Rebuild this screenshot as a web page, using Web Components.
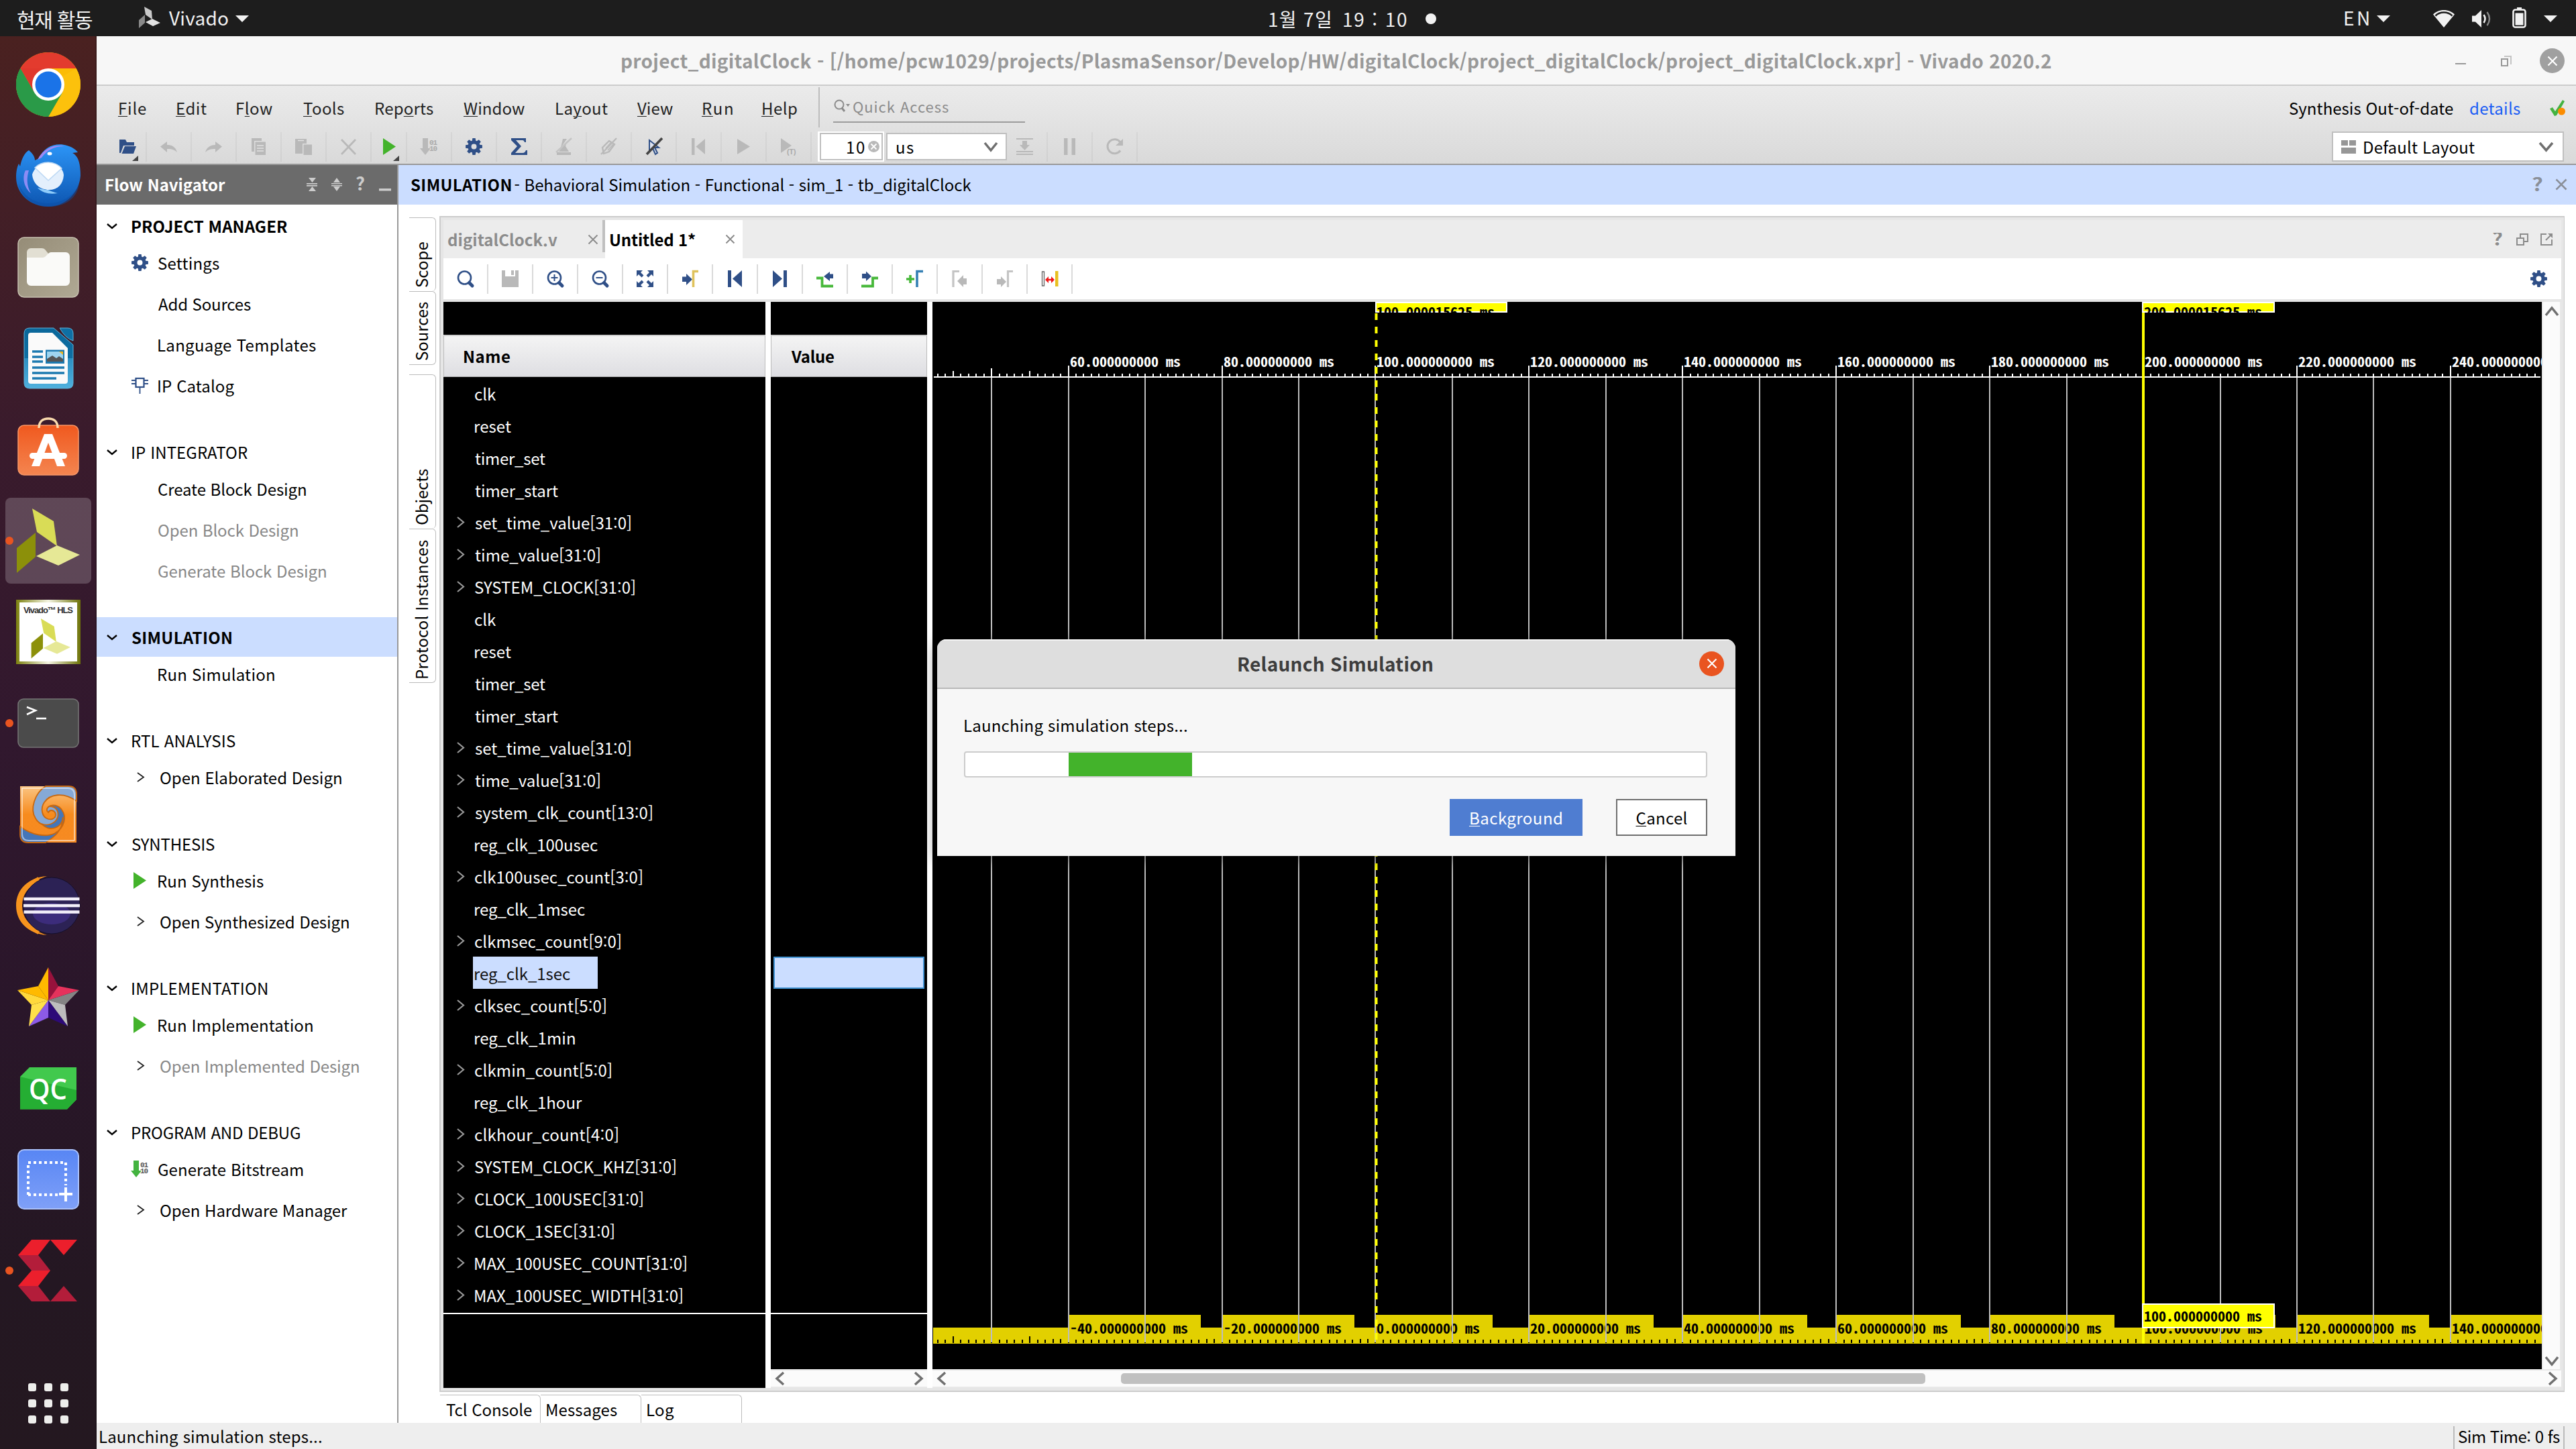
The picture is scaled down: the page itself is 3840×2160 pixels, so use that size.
<!DOCTYPE html>
<html lang="ko">
<head>
<meta charset="utf-8">
<title>Vivado 2020.2</title>
<style>
html,body{margin:0;padding:0;width:3840px;height:2160px;overflow:hidden;background:#fff}
body{font-family:"Noto Sans CJK KR","Noto Sans",sans-serif;font-size:24px;line-height:1;color:#000}
</style>
</head>
<body>
<desktop-screen></desktop-screen>
<script>
const BLUE = '#2f4f87', GREY = '#b9b9b9';

function define(name, css, html) {
  customElements.define(name, class extends HTMLElement {
    connectedCallback() {
      if (this.shadowRoot) return;
      const root = this.attachShadow({ mode: 'open' });
      root.innerHTML = `<style>*{box-sizing:border-box}:host{display:block;box-sizing:border-box}${css}</style>` +
        (typeof html === 'function' ? html(this) : html);
    }
  });
}

function gearPath(c, R, r, hole) {
  let d = '';
  for (let i = 0; i < 8; i++) {
    const a = i * Math.PI / 4;
    [[-.30, r], [-.17, R], [.17, R], [.30, r]].forEach(([o, q], k) => {
      d += (i || k ? 'L' : 'M') + (c + q * Math.sin(a + o)).toFixed(2) + ' ' + (c - q * Math.cos(a + o)).toFixed(2);
    });
  }
  return d + `ZM${c - hole} ${c}a${hole} ${hole} 0 1 0 ${2 * hole} 0a${hole} ${hole} 0 1 0 ${-2 * hole} 0z`;
}
const corner = '<path d="M28 26v8h-9z" fill="#444"/>';
const bits = (arrow, ink) => `<path d="M3 0h8v15h4l-8 10-8-10h4z" fill="${arrow}"/><text x="13" y="10" font-family="Liberation Mono" font-weight="700" font-size="11" fill="${ink}" textLength="12">01</text><text x="13" y="19" font-family="Liberation Mono" font-weight="700" font-size="11" fill="${ink}" textLength="12">10</text>`;
const lens = `<circle cx="11.5" cy="11" r="9.5" fill="none" stroke="${BLUE}" stroke-width="2.6"/><path d="M18.5 18.5l4.5 4.5" stroke="${BLUE}" stroke-width="5" stroke-linecap="round"/>`;
const ICONS = {
  open: `<path d="M0 22V2h9l2 4h11v5H6L2 22z" fill="${BLUE}"/><path d="M8 12h17l-4 11H3.500z" fill="${BLUE}"/>` + corner,
  undo: `<path d="M0 12.500L10 5v5c8 0 13 4 15 11-4-4-8-5-15-5v5z" fill="${GREY}"/>`,
  redo: `<path d="M25 12.500L15 5v5C7 10 2 14 0 21c4-4 8-5 15-5v5z" fill="${GREY}"/>`,
  copy: `<path d="M2 0h15v4H6v16H2z" fill="${GREY}"/><path d="M7.500 5.500H23V25H7.500z" fill="${GREY}"/><path d="M10 11h10M10 15h10M10 19h10" stroke="#e2e2e2" stroke-width="1.500"/>`,
  paste: `<path d="M0 1h17v7h-6v15H0z" fill="${GREY}"/><path d="M4 3.500h9" stroke="#e2e2e2" stroke-width="1.500"/><path d="M12.500 9.500H25V25H12.500z" fill="${GREY}"/>`,
  cut: `<path d="M2 2l21 22M23 2L2 24" stroke="${GREY}" stroke-width="2.800"/>`,
  run: `<path d="M4 0l19 12.500L4 25z" fill="#43b32b"/>` + corner,
  play: `<path d="M3 0l19 12.500L3 25z" fill="#43b32b"/>`,
  bits: bits(GREY, '#aaa'), bitstream: bits('#43b340', '#555'),
  gear: `<path fill-rule="evenodd" d="${gearPath(12.5, 12.6, 9.2, 4)}" fill="${BLUE}"/>`,
  sigma: `<path d="M1 0h22v6h-2c-1-2-1-3-4-3H8l8 9-9 10h11c3 0 4-2 5-4h2v7H1v-3l9-10L1 3z" fill="${BLUE}"/>`,
  noclk: `<path d="M2 21h21v4H2z" fill="${GREY}"/><path d="M11 1h6l-9 13zM5 20L17 5l-2 7 5 8z" fill="${GREY}"/><path d="M24 0L1 21" stroke="#c4c4c4" stroke-width="2.500"/>`,
  nopen: `<path d="M3 14L13 4l8 5-8 11-8 3z" fill="none" stroke="${GREY}" stroke-width="2.400"/><path d="M8 15l8-9M11 18l8-9" stroke="${GREY}" stroke-width="1.500"/><path d="M24 0L1 24" stroke="${GREY}" stroke-width="2.400"/>`,
  nocursor: `<path d="M6 3v17l5-5 4 9 3-2-4-8h6z" fill="#dfe4ef" stroke="${BLUE}" stroke-width="2"/><path d="M25 0L2 24" stroke="#444" stroke-width="3.600"/>`,
  restart: `<path d="M2 0h4.500v25H2zM22 1v23L8.500 12.500z" fill="${GREY}"/>`,
  playg: `<path d="M3 1l19 11.500L3 24z" fill="${GREY}"/>`,
  playt: `<path d="M1 0l16 11L1 22z" fill="${GREY}"/><text x="10" y="24" font-family="Liberation Sans" font-weight="700" font-size="10.500" fill="#aaa">(T)</text>`,
  step: `<path d="M0 1h25M0 20h25M0 24h25" stroke="${GREY}" stroke-width="2.200"/><path d="M9 4h7v6h4l-7.500 8L5 10h4z" fill="${GREY}"/>`,
  pause: `<path d="M4 0h5.500v25H4zM15.500 0H21v25h-5.500z" fill="${GREY}"/>`,
  reload: `<path d="M21 18.500A10.500 10.500 0 1 1 21 6" fill="none" stroke="${GREY}" stroke-width="3"/><path d="M25 1v10H14z" fill="${GREY}"/>`,
  find: lens,
  save: `<path d="M0 0h25v25H0z" fill="${GREY}"/><path d="M5 0h15v9H5z" fill="#fff"/><path d="M14 0h4v7h-4z" fill="${GREY}"/>`,
  zoomin: lens + `<path d="M11.500 6v10M6.500 11h10" stroke="${BLUE}" stroke-width="2"/>`,
  zoomout: lens + `<path d="M6.500 11h10" stroke="${BLUE}" stroke-width="2"/>`,
  zoomfit: `<path d="M0 0h9L6 3l4.500 4.500-3 3L3 6 0 9zM25 0v9l-3-3-4.500 4.500-3-3L19 3l-3-3zM0 25v-9l3 3 4.500-4.500 3 3L6 22l3 3zM25 25h-9l3-3-4.500-4.500 3-3L22 19l3-3z" fill="${BLUE}"/>`,
  tocursor: `<path d="M1 9.500h6V5l9 8.500-9 8.500v-5H1z" fill="${BLUE}"/><path d="M17.500 25V1.500H25" fill="none" stroke="#dfc25c" stroke-width="3.600"/>`,
  first: `<path d="M2 0h5v25H2zM23 0v25L9 12.500z" fill="${BLUE}"/>`,
  last: `<path d="M18 0h5v25h-5zM2 0v25l14-12.500z" fill="${BLUE}"/>`,
  prevedge: `<path d="M0 11.500h8.500v12H25" fill="none" stroke="#47b83a" stroke-width="3.800"/><path d="M25 5.500h-5V2l-9 7 9 7v-4h5z" fill="${BLUE}"/>`,
  nextedge: `<path d="M0 23.500h17v-12h8" fill="none" stroke="#47b83a" stroke-width="3.800"/><path d="M1 5h6V1.500L15 9l-8 7v-4H1z" fill="${BLUE}"/>`,
  addmark: `<path d="M0 13h12M6 7v12" stroke="#47b83a" stroke-width="3.600"/><path d="M16 25V1.500h9" fill="none" stroke="#3580b4" stroke-width="3.600"/>`,
  prevmark: `<path d="M3 25V1.500h9" fill="none" stroke="#c4c4c4" stroke-width="3.200"/><path d="M23 12h-5V7l-9 9 9 9v-4h5z" fill="${GREY}"/>`,
  nextmark: `<path d="M1 13h6V9l8 8-8 8v-4H1z" fill="${GREY}"/><path d="M17.500 25V1.500H25" fill="none" stroke="#c4c4c4" stroke-width="3.200"/>`,
  span: `<path d="M1.500 2h3v21h-3z" fill="#fff" stroke="#666" stroke-width="1.300"/><path d="M21 1h4.500v23H21z" fill="#e8c020"/><path d="M6 14l5-5v3.700h4V9l5 5-5 5v-3.700h-4V19z" fill="#f01818"/>`,
  ip: `<rect x="6.500" y="2" width="12" height="13" fill="none" stroke="${BLUE}" stroke-width="2.200"/><path d="M0 5h6M0 10h6M19 5h6M19 10h6M12.500 16v9" stroke="${BLUE}" stroke-width="1.800"/>`
};
define('ui-icon', 'svg{display:block;overflow:visible;width:25px;height:25px}', el => `<svg viewBox="0 0 25 25">${ICONS[el.getAttribute('name')]}</svg>`);

define('ui-chevron', ':host{display:block;flex:none}svg{display:block;overflow:visible}', el => {
  const w = +el.getAttribute('w'), h = +el.getAttribute('h'), s = el.getAttribute('s') || 2, c = el.getAttribute('c') || '#000';
  const d = { down: `M1 1L${w / 2} ${h - 1}L${w - 1} 1`, up: `M1 ${h - 1}L${w / 2} 1L${w - 1} ${h - 1}`, right: `M1 1L${w - 1} ${h / 2}L1 ${h - 1}`, left: `M${w - 1} 1L1 ${h / 2}L${w - 1} ${h - 1}` }[el.getAttribute('dir')];
  return `<svg width="${w}" height="${h}"><path d="${d}" fill="none" stroke="${c}" stroke-width="${s}"/></svg>`;
});
define('ui-x', ':host{flex:none}svg{display:block}', el => {
  const n = +el.getAttribute('n');
  return `<svg width="${n}" height="${n}"><path d="M1.500 1.500L${n - 1.5} ${n - 1.5}M${n - 1.5} 1.500L1.500 ${n - 1.5}" stroke="${el.getAttribute('c')}" stroke-width="${el.getAttribute('s') || 2.4}"/></svg>`;
});
const f = (w, t, style = '') => `<fit-text w="${w}" style="${style}">${t}</fit-text>`;

/* ---------- top bar ---------- */
define('top-bar', `:host{height:54px;background:#1d1d1d;color:#f2f2f2;font-size:28px;display:flex;align-items:center;padding-left:26px;padding-bottom:2px}
svg{display:block;flex:none}`, `
${f(112, '현재 활동', 'font-size:30px;margin-top:3px')}
<svg width="32" height="32" viewBox="0 0 32 32" style="margin-left:69px"><path d="M8 0l11 6 1 13L10 12z" fill="#c9c9c9"/><path d="M0 20l9-8v12l-9 8z" fill="#8a8a8a"/><path d="M10 23l10-5 12 6-11 5z" fill="#e3e3e3"/></svg>
${f(88, 'Vivado', 'margin-left:13px')}
<svg width="20" height="10" style="margin-left:11px;margin-top:4px"><path d="M0 0h20l-10 10z" fill="#f2f2f2"/></svg>
${f(92, '1월 7일', 'margin-left:1521px;margin-top:4px')}${f(94, '19 : 10', 'margin-left:19px;margin-top:4px')}
<svg width="16" height="16" style="margin-left:28px;margin-top:3px"><circle cx="8" cy="8" r="8" fill="#f2f2f2"/></svg>
${f(36, 'EN', 'margin-left:1354px')}
<svg width="20" height="10" style="margin-left:12px;margin-top:4px"><path d="M0 0h20l-10 10z" fill="#f2f2f2"/></svg>
<svg width="32" height="26" viewBox="0 0 32 26" style="margin-left:64px;margin-top:3px"><path d="M16 0C9.500 0 4 2.500 0 6.500L16 26 32 6.500C28 2.500 22.500 0 16 0z" fill="#f2f2f2"/><path d="M3.500 8.500C7 5 11 3.500 16 3.500s9 1.500 12.500 5" fill="none" stroke="#1d1d1d" stroke-width="2.500"/></svg>
<svg width="30" height="26" viewBox="0 0 30 26" style="margin-left:26px;margin-top:3px"><path d="M0 8.500h5L14 0v26l-9-8.500H0z" fill="#f2f2f2"/><path d="M17.500 7q4 6 0 12" fill="none" stroke="#f2f2f2" stroke-width="2.600"/><path d="M22.500 3q7 10 0 20" fill="none" stroke="#888" stroke-width="2.400"/></svg>
<svg width="21" height="31" viewBox="0 0 21 31" style="margin-left:30px"><path d="M7 0h7v3H7z" fill="#f2f2f2"/><rect x="1.500" y="3.500" width="18" height="26" rx="3" fill="none" stroke="#f2f2f2" stroke-width="2.600"/><path d="M4.500 8.500h12v18h-12z" fill="#f2f2f2"/></svg>
<svg width="20" height="10" style="margin-left:26px;margin-top:4px"><path d="M0 0h20l-10 10z" fill="#f2f2f2"/></svg>`);

/* ---------- dock ---------- */
const vivadoLogo = '<path d="M24 0l32 19 5 37-30-21z" fill="#d9dc56"/><path d="M1 59l28-23v36L1 96z" fill="#8c900a"/><path d="M30 71l31-16 34 14-32 16z" fill="#e6e896"/>';
const DOCK = {
  chrome: `<circle cx="48" cy="48" r="48" fill="#fbbc05"/><path d="M48 48L6.400 24A48 48 0 0 1 89.600 24H48z" fill="#e33b2e"/><path d="M48 48L89.600 24A48 48 0 0 1 48 96L68.800 60z" fill="#fcc10c"/><path d="M48 96A48 48 0 0 1 6.400 24L27.200 60 48 72 68.800 60z" fill="#2a9a48"/><path d="M6.400 24L27.200 60 48 48V24z" fill="#e0382c"/><path d="M6.400 24A48 48 0 0 0 48 96L68.800 60 48 72 27.200 60z" fill="#2a9a48"/><circle cx="48" cy="48" r="24" fill="#fff"/><circle cx="48" cy="48" r="19.500" fill="#1a73e8"/>`,
  thunderbird: `<defs><linearGradient id="tb" x1="0" y1="0" x2="0" y2="1"><stop offset="0" stop-color="#2c95f7"/><stop offset="1" stop-color="#0d55b0"/></linearGradient></defs><path d="M34 22C42 4 60-2 76 3c8 2 14 7 16 10l-8 1c8 4 12 14 12 34-2 26-23 46-48 46C22 94 0 76 0 50 0 40 2 34 4 30l2 4c2-10 6-20 13-24 6 5 9 10 9 15z" fill="url(#tb)"/><path d="M32 24C42 5 60 1 72 4c-16 0-26 6-34 17z" fill="#a08af5"/><path d="M14 40c-6 12-1 27 8 34-7-12-6-24-3-34z" fill="#8b8cf5"/><path d="M24 46c4-12 14-18 26-17 12 1 20 8 21 18-1 14-9 22-22 22S25 60 24 46z" fill="#e3effc"/><path d="M28 36l20 19 20-18c-4-5-12-9-20-9s-15 3-20 8z" fill="#fff" stroke="#bcd8f4" stroke-width="1.500"/><path d="M32 66c8 8 18 10 30 8-10-2-14-6-18-5z" fill="#8ecbfa"/><ellipse cx="50" cy="15" rx="3.500" ry="2.500" fill="#fff"/><path d="M4 60c8 22 28 30 46 29 20-1 38-12 44-30-2 23-22 35-44 35S8 82 4 60z" fill="#0b4ea6" opacity=".5"/>`,
  files: `<defs><linearGradient id="fl" x1="0" y1="0" x2="1" y2="1"><stop offset="0" stop-color="#958c77"/><stop offset="1" stop-color="#b0a994"/></linearGradient></defs><rect x="3" y="4" width="90" height="89" rx="9" fill="url(#fl)" stroke="#c5bfae" stroke-width="1.500"/><path d="M16 26a6 6 0 0 1 6-6h16q4 0 6 3l4 5v8H16z" fill="#e2dfd3"/><path d="M16 34h24q3 0 5-3l3-3q2-2 4-2h22a6 6 0 0 1 6 6v38a6 6 0 0 1-6 6H22a6 6 0 0 1-6-6z" fill="#fafaf8"/>`,
  writer: `<defs><linearGradient id="wr" x1="0" y1="0" x2="0" y2="1"><stop offset="0" stop-color="#0a679a"/><stop offset=".5" stop-color="#0e6fa4"/><stop offset=".5" stop-color="#2c8fc2"/><stop offset="1" stop-color="#4fb0dd"/></linearGradient></defs><path d="M20 3h36l29 25v57q0 8-8 8H20q-8 0-8-8V11q0-8 8-8z" fill="url(#wr)" stroke="#5eb3da"/><path d="M65 3h12q8 0 8 8v11q-12-4-20-19z" fill="#0e6fa4" stroke="#5eb3da"/><path d="M22 10h32l23 23v49q0 4-4 4H22q-4 0-4-4V14q0-4 4-4z" fill="#fafafa"/><path d="M24 38h16M24 46h16M24 53h16M24 62h48M24 70h48M24 78h36" stroke="#1d7ab0" stroke-width="3.500"/><path d="M44 35.500h28V56H44z" fill="#1d7ab0"/><path d="M46 38h24v15H46z" fill="#9ed4ef"/><path d="M46 53v-4l8-5 6 4 4-3 6 4v4z" fill="#555"/><path d="M64 38h6v5z" fill="#f5b417"/>`,
  software: `<defs><linearGradient id="sw" x1="0" y1="0" x2="0" y2="1"><stop offset="0" stop-color="#f0591f"/><stop offset="1" stop-color="#f48550"/></linearGradient></defs><rect x="3" y="12" width="90" height="74" rx="9" fill="url(#sw)" stroke="#f79767" stroke-width="1.500"/><path d="M34 16C34 6 40 2 48 2s14 4 14 14" fill="none" stroke="#fbdcae" stroke-width="3.500"/><path d="M42 25h12l19 48H61L48 38 35 73H23z" fill="#fff"/><rect x="20" y="53" width="56" height="9" rx="4.500" fill="#fff"/>`,
  vivado: vivadoLogo,
  hls: `<defs><linearGradient id="hl"><stop offset="0" stop-color="#7d8210"/><stop offset=".5" stop-color="#f4f4e2"/><stop offset="1" stop-color="#6e7308"/></linearGradient></defs><path d="M0 0h96v96H0z" fill="url(#hl)"/><path d="M5 4h86v88H5z" fill="#fff"/><g transform="translate(22 28) scale(.62)">${vivadoLogo}</g><text x="11" y="20" font-family="Liberation Sans" font-weight="700" font-size="13" fill="#333" textLength="74">Vivado™ HLS</text>`,
  terminal: `<rect x="3" y="12" width="90" height="72" rx="8" fill="#4b4b4b" stroke="#767676" stroke-width="1.500"/><path d="M16 24l13 5-13 6" fill="none" stroke="#fff" stroke-width="2.600"/><path d="M30 41h15" stroke="#fff" stroke-width="2.600"/>`,
  swirl: `<defs><linearGradient id="sr" x1="0" y1="0" x2="0" y2="1"><stop offset="0" stop-color="#fbc583"/><stop offset=".5" stop-color="#f78b1e"/><stop offset="1" stop-color="#f68a22"/></linearGradient></defs><path d="M6 6h72q12 0 12 12v72H18Q6 90 6 78z" fill="url(#sr)"/><path d="M44 6h34q12 0 12 12v10C70 14 50 18 42 30c-6 9-4 22 6 25 8 2 13-4 10-10-3-4-8-4-10 0-5-4 0-11 7-10 12 2 15 16 7 25-10 9-27 5-33-6C20 40 28 16 44 6z" fill="#86a9d6" stroke="#c9680f" stroke-width="1.800"/><path d="M6 66c18 14 40 16 52 10 14-8 18-24 10-35-5-7-14-8-18-5 10 0 14 8 12 16-3 10-16 14-24 10 10 12 30 8 32-10-1 22-14 30-26 38H18Q6 90 6 78z" fill="#4576b8" stroke="#c9680f" stroke-width="1.800"/><path d="M9 9h68q10 0 10 10v68" fill="none" stroke="#fff" stroke-opacity=".5" stroke-width="2"/><path d="M9 9v68q0 10 10 10h68" fill="none" stroke="#fff" stroke-opacity=".5" stroke-width="2"/>`,
  eclipse: `<path d="M46 4C18 6 0 24 0 48s18 42 46 44C26 86 8 72 8 48S26 10 46 4z" fill="#f7941e"/><path d="M34 8C14 18 6 32 6 48s8 30 28 40" fill="none" stroke="#f7941e" stroke-width="6"/><circle cx="53" cy="48" r="42" fill="#2c2255" stroke="#15102c"/><ellipse cx="53" cy="60" rx="28" ry="16" fill="#43318c" opacity=".7"/><path d="M11.500 38h83M11 48h84M11.500 57.500h83" stroke="#f3f0fa" stroke-width="4.500"/>`,
  star: [['48 4 48 53 33 32', '#ffba00'], ['48 4 63 32 48 53', '#97123c'], ['63 32 94 38 48 53', '#e6325c'], ['94 38 73 60 48 53', '#848484'], ['73 60 77 92 48 53', '#bdbdbd'], ['77 92 48 79 48 53', '#2d0a78'], ['48 79 19 92 48 53', '#8c5ae6'], ['19 92 23 60 48 53', '#ffe04a'], ['23 60 2 38 48 53', '#ffd93c'], ['2 38 33 32 48 53', '#ffba00']].map(([p, c]) => `<polygon points="${p}" fill="${c}"/>`).join(''),
  qc: `<path d="M6 31l14-14h70v48L76 79.500H6z" fill="#41c94d"/><path d="M6 31l84 20v14L76 79.500H6z" fill="#25ae33"/><text x="19" y="64.500" font-family="Open Sans,Noto Sans" font-weight="600" font-size="44" fill="#fff" textLength="57" lengthAdjust="spacingAndGlyphs">QC</text>`,
  shot: `<defs><linearGradient id="sh" x1="0" y1="0" x2="0" y2="1"><stop offset="0" stop-color="#5886f4"/><stop offset="1" stop-color="#7fa0f8"/></linearGradient></defs><rect x="3" y="4" width="90" height="88" rx="9" fill="url(#sh)" stroke="#a9c0fb" stroke-width="2"/><path d="M18 71V23M18 23h56M74 23v34M18 71h48" fill="none" stroke="#fff" stroke-width="4" stroke-dasharray="4 4"/><path d="M64 70h20M74 60v21" stroke="#fff" stroke-width="4"/>`,
  xilinx: `<path d="M23 2h28L33 25H3zM51 2h40L71 25zM23 48h28L33 71H3z" fill="#ec1f2c"/><path d="M3 25h30l18 23H23zM3 71h30l18 23H23zM71 71l20 23H51z" fill="#b31d3a"/>`
};
define('dock-icon', `:host{height:136px;display:flex;align-items:center;justify-content:center;position:relative}
.tile{width:128px;height:128px;border-radius:8px;display:flex;align-items:center;justify-content:center}
:host([active]) .tile{background:rgba(255,255,255,.2)}
svg{width:96px;height:96px;display:block;overflow:visible}
i{position:absolute;left:8px;top:62px;width:12px;height:12px;border-radius:50%;background:#e95420}`,
  el => `<div class="tile"><svg viewBox="0 0 96 96">${DOCK[el.getAttribute('name')]}</svg></div>${el.hasAttribute('running') ? '<i></i>' : ''}`);
define('app-dock', `:host{width:144px;flex:none;padding-top:4px;display:flex;flex-direction:column;background:linear-gradient(#4a2120,#431f26 12%,#3a1b2c 28%,#31182e 50%,#2a162a 68%,#241722 88%,#241820);border-right:2px solid rgba(0,0,0,.18)}
dock-icon{width:144px}
.grid{margin:auto 0 38px 42px;display:grid;grid-template-columns:12px 12px 12px;gap:12px}
.grid b{height:12px;border-radius:3px;background:#eeeeec}`,
  Object.keys(DOCK).map(n => `<dock-icon name="${n}"${n === 'vivado' ? ' active' : ''}${/vivado|terminal|xilinx/.test(n) ? ' running' : ''}></dock-icon>`).join('') + `<div class="grid">${'<b></b>'.repeat(9)}</div>`);

/* ---------- title bar ---------- */
define('title-bar', `:host{height:74px;background:#f7f7f7;border-top:1px solid #fff;border-bottom:2px solid #ccc;display:flex;align-items:center;padding:0 17px 0 783px;color:#999;font-weight:700;font-size:28px}
.close{width:37px;height:37px;border-radius:50%;background:#a0a0a0;display:flex;align-items:center;justify-content:center;margin-left:42px}
.min{width:16px;height:2px;background:#999;margin:8px 0 0 602px}svg{display:block;margin-left:52px}`,
  `${f(2131, 'project_digitalClock - [/home/pcw1029/projects/PlasmaSensor/Develop/HW/digitalClock/project_digitalClock/project_digitalClock.xpr] - Vivado 2020.2', 'margin-top:-2px')}
<div class="min"></div><svg width="16" height="16"><path d="M5 1h10v12" fill="none" stroke="#c4c4c4" stroke-width="2"/><path d="M1 5h9v10H1z" fill="none" stroke="#999" stroke-width="2"/></svg>
<div class="close"><ui-x n="16" c="#fff" s="2.200"></ui-x></div>`);

/* ---------- menu and tool bar ---------- */
define('menu-bar', `:host{height:65px;display:flex;align-items:center;padding-left:34px;color:#222}
u{text-decoration-thickness:1px;text-underline-offset:2px}
.quick{align-self:stretch;margin:2px 0 3px 32px;border-left:2px solid #bdbdbd;display:flex;align-items:flex-start;padding-left:20px}
.field{width:286px;height:53px;border-bottom:2px solid #9c9c9c;display:flex;align-items:center;padding:5px 0 0 1px;font-size:22px;color:#8b8b8b}
svg{display:block}.r{margin-left:auto;display:flex;align-items:center;padding-right:16px;color:#000}`,
  [[40, '<u>F</u>ile', 0], [44, '<u>E</u>dit', 46], [53, 'F<u>l</u>ow', 45], [61, '<u>T</u>ools', 46], [86, 'Rep<u>o</u>rts', 47], [91, '<u>W</u>indow', 45], [77, 'La<u>y</u>out', 47], [53, '<u>V</u>iew', 44], [44, '<u>R</u>un', 45], [51, '<u>H</u>elp', 45]]
    .map(([w, t, m]) => f(w, t, `margin-left:${m}px`)).join('') +
  `<div class="quick"><div class="field"><svg width="24" height="20"><circle cx="8" cy="8" r="6.500" fill="none" stroke="#8b8b8b" stroke-width="2"/><path d="M12 13l4 5" stroke="#8b8b8b" stroke-width="3"/><path d="M18 7h6l-3 4z" fill="#8b8b8b"/></svg>${f(142, 'Quick Access', 'margin-left:5px')}</div></div>
  <div class="r">${f(244, 'Synthesis Out-of-date')}${f(75, 'details', 'margin-left:25px;color:#1a5cf5')}<svg width="25" height="24" viewBox="0 0 25 24" style="margin-left:42px"><path d="M2 13l4-2 4 6L21 0l3 2-12 21-3 1z" fill="#43b340"/><circle cx="19.500" cy="17" r="5.500" fill="#fb8c00"/></svg></div>`);

define('tool-cell', `:host{height:44px;width:67px;display:flex;align-items:center;justify-content:center;border-right:2px solid rgba(0,0,0,.045);flex:none}`, el => `<ui-icon name="${el.getAttribute('name')}"></ui-icon>`);
define('main-toolbar', `:host{height:51px;display:flex;align-items:center;padding-left:19px}
.num{width:99px;height:45px;background:#fff;padding:2px 2px 2px 3px;margin-left:9px}
.num div{height:41px;border:2px solid #c0c0c0;display:flex;align-items:center;justify-content:flex-end;padding-right:3px;gap:5px}
.clr{width:17px;height:17px;border-radius:50%;background:#b9b9b9;display:flex;align-items:center;justify-content:center}
.combo{height:41px;border:2px solid #c0c0c0;background:#fff;display:flex;align-items:center;justify-content:space-between}
.us{width:180px;margin-left:3px;padding:0 12px 0 14px}
.lay{width:346px;height:45px;margin:0 18px 0 auto;padding:0 14px 0 12px}
.lay svg{display:block;margin-right:12px}.lay ui-chevron{margin-left:auto}`,
  [['open', 56], ['undo'], ['redo'], ['copy'], ['paste'], ['cut'], ['run', 53], ['bits'], ['gear'], ['sigma'], ['noclk'], ['nopen'], ['nocursor'], ['restart'], ['playg'], ['playt']]
    .map(([n, w]) => `<tool-cell name="${n}"${w ? ` style="width:${w}px"` : ''}></tool-cell>`).join('') +
  `<div class="num"><div>${f(26, '10')}<span class="clr"><ui-x n="11" c="#fff" s="1.800"></ui-x></span></div></div>
  <div class="combo us">${f(25, 'us')}<ui-chevron dir="down" w="20" h="13" s="3.500" c="#707070"></ui-chevron></div>
  <tool-cell name="step" style="width:61px;padding-right:6px"></tool-cell><tool-cell name="pause"></tool-cell><tool-cell name="reload"></tool-cell>
  <div class="combo lay"><svg width="22" height="20"><path d="M0 0h10v8H0zM12 0h10v8H12zM0 11h22v9H0z" fill="#979797"/></svg>${f(165, 'Default Layout')}<ui-chevron dir="down" w="21" h="13" s="3.500" c="#707070"></ui-chevron></div>`);
define('app-header', `:host{height:118px;background:linear-gradient(#ebebeb,#d9d9d9);border-bottom:2px solid #999}`, '<menu-bar></menu-bar><main-toolbar></main-toolbar>');

/* ---------- flow navigator ---------- */
define('flow-item', `:host{height:61px;display:flex;align-items:center;padding-left:52px}
.i{width:40px;flex:none}.c{width:43px;padding-left:8px;flex:none}:host([off]){color:#878787}`, el => {
  const ic = el.getAttribute('icon');
  return (ic === 'chev' ? '<div class="c"><ui-chevron dir="right" w="11" h="15" s="1.800" c="#222"></ui-chevron></div>' : `<div class="i">${ic ? `<ui-icon name="${ic}"></ui-icon>` : ''}</div>`) + '<slot></slot>';
});
define('flow-section', `:host{margin-bottom:39px}
.h{height:59px;display:flex;align-items:center;padding-left:15px;gap:22px}
:host([sel]) .h{background:#cbddff}:host([sel]) .h,:host([b]) .h{font-weight:700}
.items{margin-top:-5px}`, el => `<div class="h"><ui-chevron dir="down" w="16" h="8" s="2.400"></ui-chevron>${f(el.getAttribute('w'), el.getAttribute('label'))}</div><div class="items"><slot></slot></div>`);
const FLOW = [
  ['PROJECT MANAGER', 231, 'b', [['Settings', 91, 'gear'], ['Add Sources', 138], ['Language Templates', 235], ['IP Catalog', 113.5, 'ip']]],
  ['IP INTEGRATOR', 172, '', [['Create Block Design', 220], ['Open Block Design', 208, '', 'off'], ['Generate Block Design', 250, '', 'off']]],
  ['SIMULATION', 148, 'sel', [['Run Simulation', 173]]],
  ['RTL ANALYSIS', 154, '', [['Open Elaborated Design', 270, 'chev']]],
  ['SYNTHESIS', 123, '', [['Run Synthesis', 157, 'play'], ['Open Synthesized Design', 281, 'chev']]],
  ['IMPLEMENTATION', 201, '', [['Run Implementation', 230, 'play'], ['Open Implemented Design', 296, 'chev', 'off']]],
  ['PROGRAM AND DEBUG', 250, '', [['Generate Bitstream', 216, 'bitstream'], ['Open Hardware Manager', 279, 'chev']]]
];
define('flow-navigator', `:host{width:450px;flex:none;border-right:2px solid #999;background:#fff}
header{height:59px;background:#6b6b6b;color:#fff;font-weight:700;display:flex;align-items:center;padding:0 9px 2px 14px}
header svg{display:block;margin-left:auto}.body{padding-top:2px}
header text{font-size:27px;font-weight:700}`,
  `<header>${f(178, 'Flow Navigator')}<svg width="126" height="24" viewBox="0 0 126 24" fill="#ccc"><path d="M3 2h11l-5.500 7zM3 22h11l-5.500-7zM0 10h16v1.700H0zM0 13h16v1.700H0z"/><path d="M40 9h10l-5-7zM40 15h10l-5 7zM37 10h16v1.500H37zM37 13h16v1.500H37z"/><text x="73" y="21" textLength="14" lengthAdjust="spacingAndGlyphs">?</text><path d="M108 18h18v3.500h-18z"/></svg></header>
<div class="body">${FLOW.map(([t, w, a, items]) => `<flow-section label="${t}" w="${w}" ${a}>${items.map(([n, iw, ic, off]) => `<flow-item icon="${ic || ''}" ${off || ''}>${f(iw, n)}</flow-item>`).join('')}</flow-section>`).join('')}</div>`);

/* ---------- vertical tabs ---------- */
define('side-tab', `:host{width:40px;border:1.500px solid #bbb;border-left:0;border-radius:0 6px 6px 0;border-bottom-width:0}
:host([end]){border-bottom-width:1.500px}
div{height:100%;width:100%;writing-mode:vertical-rl;transform:rotate(180deg);display:flex;flex-direction:row;align-items:center;padding:6px 0 0 4px}`, '<div><slot></slot></div>');
define('side-tabs', `:host{width:61px;flex:none;padding:19px 0 0 16px;background:#fff}`, `
<side-tab style="height:110px">${f(67.5, 'Scope')}</side-tab><side-tab end style="height:110px">${f(87, 'Sources')}</side-tab>
<side-tab style="height:230px;margin-top:14px">${f(83, 'Objects')}</side-tab><side-tab end style="height:230px">${f(206, 'Protocol Instances')}</side-tab>`);

/* ---------- editor ---------- */
define('editor-tabs', `:host{height:57px;background:#ececec;display:flex;align-items:stretch;font-weight:700}
div{display:flex;align-items:center}.a{width:241px;color:#8c8c8c;padding:0 7px;justify-content:space-between;border:0}
.s{width:4px;height:48px;background:#c0c0c0;margin-left:-4px}.b{width:205px;background:#fff;padding:0 11px 0 8px;justify-content:space-between}
svg{display:block;margin:auto 13px auto auto}text{font-size:27px;fill:#8c8c8c}`,
  `<div class="a">${f(163, 'digitalClock.v')}<ui-x n="16" c="#8c8c8c" s="2" style="margin-right:3px"></ui-x></div><div class="s"></div><div class="b">${f(126, 'Untitled 1*')}<ui-x n="15" c="#8c8c8c" s="2"></ui-x></div>
<svg width="90" height="20" fill="none" stroke="#8c8c8c" stroke-width="2"><text x="0" y="19" stroke="none" textLength="16" lengthAdjust="spacingAndGlyphs">?</text><path d="M42 7V2h11v11h-6M37 8h10v10H37z"/><path d="M81 2h-8v16h16v-8"/><path d="M80 11l7-7"/><path d="M83 1h7v7z" fill="#8c8c8c" stroke="none"/></svg>`);
define('wave-toolbar', `:host{height:61px;background:#fff;display:flex;align-items:center;border:0}
tool-cell{border-right-color:#dadada}ui-icon{margin:0 21px 0 auto}`,
  ['find', 'save', 'zoomin', 'zoomout', 'zoomfit', 'tocursor', 'first', 'last', 'prevedge', 'nextedge', 'addmark', 'prevmark', 'nextmark', 'span'].map(n => `<tool-cell name="${n}"></tool-cell>`).join('') + '<ui-icon name="gear"></ui-icon>');

const SIGNALS = [['clk', 31], ['reset', 54], ['timer_set', 105], ['timer_start', 124], ['set_time_value[31:0]', 232, 1], ['time_value[31:0]', 186, 1], ['SYSTEM_CLOCK[31:0]', 238, 1],
['clk', 31], ['reset', 54], ['timer_set', 105], ['timer_start', 124], ['set_time_value[31:0]', 232, 1], ['time_value[31:0]', 186, 1], ['system_clk_count[13:0]', 264, 1], ['reg_clk_100usec', 183], ['clk100usec_count[3:0]', 249, 1], ['reg_clk_1msec', 164], ['clkmsec_count[9:0]', 217, 1], ['reg_clk_1sec', 142, 0, 'sel'], ['clksec_count[5:0]', 195, 1], ['reg_clk_1min', 149], ['clkmin_count[5:0]', 203, 1], ['reg_clk_1hour', 160], ['clkhour_count[4:0]', 213, 1], ['SYSTEM_CLOCK_KHZ[31:0]', 299, 1], ['CLOCK_100USEC[31:0]', 250, 1], ['CLOCK_1SEC[31:0]', 207, 1], ['MAX_100USEC_COUNT[31:0]', 315, 1], ['MAX_100USEC_WIDTH[31:0]', 309, 1]];
define('signal-row', `:host{height:48px;display:flex;align-items:center;padding-left:20px;color:#fff}
.c{width:24px;flex:none}.n{height:48px;display:flex;align-items:center;padding:2px 0 0 3px}
:host([sel]) .n{width:186px;background:#cbddff;color:#111}`,
  el => `<div class="c">${el.hasAttribute('bus') ? '<ui-chevron dir="right" w="11" h="17" s="2.200" c="#999"></ui-chevron>' : ''}</div><div class="n"><slot></slot></div>`);
const head = `.hd{height:63px;background:linear-gradient(#f4f4f4,#dedee2);border:1px solid #bbb;border-top:2px solid #ccc;font-weight:700;color:#000;display:flex;align-items:center;padding-left:30px}`;
define('name-column', `:host{width:480px;flex:none;background:#000;padding-top:49px}${head}.rows{height:1397px;border-bottom:2px solid #fff}`,
  `<div class="hd">${f(68, 'Name')}</div><div class="rows">${SIGNALS.map(([n, w, bus, s]) => `<signal-row ${bus ? 'bus' : ''} ${s || ''}>${f(w, n)}</signal-row>`).join('')}</div>`);
define('h-scroll', `:host{height:28px;background:#fbfbfb;border-top:2px solid #e8e8e8;border-bottom:2px solid #e8e8e8;display:flex;align-items:center;justify-content:space-between;padding:0 7px 0 8px}`,
  '<ui-chevron dir="left" w="12" h="20" s="3.500" c="#707070"></ui-chevron><slot></slot><ui-chevron dir="right" w="12" h="20" s="3.500" c="#707070"></ui-chevron>');
define('value-column', `:host{width:233px;flex:none;background:#000;padding-top:49px;margin-left:8px;display:flex;flex-direction:column}${head}
.hd{padding-left:29px}.rows{height:1397px;border-bottom:2px solid #fff;padding:864px 4px 0}.v{height:48px;background:#cbddff;border:2px solid #3f92d2}h-scroll{margin-top:auto}`,
  `<div class="hd">${f(64, 'Value')}</div><div class="rows"><div class="v"></div></div><h-scroll></h-scroll>`);

define('wave-view', `:host{width:2399px;flex:none;height:1591px;background:#000}svg{display:block;width:2399px;height:1591px}
text{font-family:"Noto Sans Mono CJK KR","Liberation Mono",monospace;font-weight:700;font-size:21px;white-space:pre}`, () => {
  const X0 = 1592.6, P = 228.92, R = 3789;
  const label = (x, y, s, c) => `<text x="${x}" y="${y}" fill="${c}" textLength="${s.length * 11}" lengthAdjust="spacingAndGlyphs">${s}</text>`;
  const dec = v => (v < 0 ? '-' : '') + Math.abs(v) + '.000000000 ms';
  let top = '', bottom = '', boxes = '', grid = '', over = '';
  for (let i = -17; i <= 192; i++) {
    const x = Math.round(X0 + i * P / 20);
    if (x > R - 4) break;
    const h = i % 20 === 0 ? 16 : i === -10 ? 12 : i < 0 && i % 5 === 0 ? 8 : 4;
    top += `<path d="M${x - 1} ${561 - h}h2v${h}h-2z"/>`;
    const hb = i < 0 && i % 5 === 0 ? 10 : (i % 20 + 20) % 20 > 17 ? 6 : 5;
    bottom += `<path d="M${x - 1} ${2002 - hb}h2v${hb}h-2z"/>`;
  }
  for (let k = 0; k <= 9; k++) {
    const x = Math.round(X0 + k * P), s = dec(60 + 20 * k), b = dec(-40 + 20 * k);
    top += label(x + 2, 546.5, s, '#fff');
    boxes += `<path d="M${x + 1} 1960h${b.length * 11 + 20}v20h${-b.length * 11 - 20}z" fill="#e2d000"/>`;
    over += label(x + 2, 1987.5, b, '#000');
  }
  for (let g = -1; g <= 18; g++) {
    const x = Math.round(X0 + g * P / 2);
    grid += `<path d="M${x - 1} 563h2v1438h-2z"/>`;
  }
  let dash = '';
  for (let y = 467; y < 2000; y += 20) dash += `M2049.500 ${y}h4v10h-4z`;
  return `<svg viewBox="1390 450 2399 1591">
<defs><clipPath id="c1"><path d="M1390 450h2399v16H1390z"/></clipPath></defs>
<path d="M1392 561h2395v2H1392z" fill="#fff"/><g fill="#fff">${top}</g>
<path d="M1391 1979h2398v24H1391z" fill="#e2d000"/>${boxes}<g fill="#000">${bottom}</g>${over}
<g fill="#bdbdbd">${grid}</g>
<path d="${dash}" fill="#ff0"/><path d="M3193 466h4v1537h-4z" fill="#ff0"/>
<g clip-path="url(#c1)"><path d="M2050 450h197v16h-197zM3193 450h198v16h-198z" fill="#fff"/><path d="M2052 452h193v12h-193zM3195 452h194v12h-194z" fill="#ff0"/>
${label(2052, 472.500, '100.000015625 ms', '#000')}${label(3196, 472.500, '200.000015625 ms', '#000')}</g>
<path d="M3193 1943h198v37h-198z" fill="#fff"/><path d="M3195 1945h194v33h-194z" fill="#ff0"/>${label(3196, 1970, '100.000000000 ms', '#000')}
</svg>`;
});
define('wave-area', `:host{width:2428px;flex:none;margin-left:8px;display:flex;flex-direction:column}
.t{display:flex;height:1591px}.v{width:29px;background:#fbfbfb;border-left:2px solid #e8e8e8;border-right:2px solid #e8e8e8;display:flex;flex-direction:column;justify-content:space-between;align-items:center;padding:8px 0 6px}
b{display:block;width:1199px;height:16px;background:#c0c0c0;border-radius:5px;margin-right:668px}`,
  `<div class="t"><wave-view></wave-view><div class="v"><ui-chevron dir="up" w="20" h="13" s="3.500" c="#707070"></ui-chevron><ui-chevron dir="down" w="20" h="13" s="3.500" c="#707070"></ui-chevron></div></div>
<h-scroll><b></b></h-scroll>`);
define('wave-editor', `:host{flex:none;width:3168px;height:1753px;margin-top:17px;background:#e6e6e6;border:2px solid #ccc;border-right-width:1px;padding:4px}
.w{margin-top:4px;display:flex;height:1619px;background:#fff;width:3157px}editor-tabs,wave-toolbar{width:3157px}`,
  `<editor-tabs></editor-tabs><wave-toolbar></wave-toolbar><div class="w"><name-column></name-column><value-column></value-column><wave-area></wave-area></div>`);
define('console-tabs', `:host{display:flex;margin:4px 0 0 62px;height:42px}
div{width:150px;border:1.500px solid #bbb;border-bottom:0;border-left-width:0;border-radius:0 6px 0 0;display:flex;align-items:center;padding-left:9px}
div:first-child{border-left-width:1.500px;border-radius:6px 6px 0 0}`, `<div>${f(128, 'Tcl Console')}</div><div>${f(105, 'Messages')}</div><div>${f(40, 'Log')}</div>`);
define('sim-panel', `:host{flex:1;display:flex;flex-direction:column;background:#fff;min-width:0}
header{height:59px;background:#cbddff;display:flex;align-items:center;padding:0 13px 2px 19px;flex:none}
.m{display:flex;height:1770px}b{font-weight:700}svg{display:block;margin:0 18px 0 auto}text{font-size:28px;font-weight:700;fill:#8a8f99}`,
  `<header><b>${f(148.5, 'SIMULATION')}</b>${f(680, '- Behavioral Simulation - Functional - sim_1 - tb_digitalClock', 'margin-left:6px')}<svg width="17" height="22"><text x="0" y="21" textLength="17" lengthAdjust="spacingAndGlyphs">?</text></svg><ui-x n="18" c="#8a8f99" s="2.600"></ui-x></header>
<div class="m"><side-tabs></side-tabs><wave-editor></wave-editor></div><console-tabs></console-tabs>`);
define('status-bar', `:host{height:39px;flex:none;background:#eee;display:flex;align-items:center;padding-left:5px}
div{align-self:stretch;margin:5px 17px 0 auto;border-left:2px solid #bbb;border-right:2px solid #bbb;width:166px;display:flex;align-items:center;padding:0 0 5px 6px}`,
  `${f(330, 'Launching simulation steps...')}<div>${f(151, 'Sim Time: 0 fs')}</div>`);

/* ---------- dialog ---------- */
define('progress-dialog', `:host{position:absolute;left:1397px;top:953px;width:1190px;height:323px;background:#f7f7f7;border-radius:14px 14px 0 0;box-shadow:0 4px 22px rgba(0,0,0,.55);overflow:hidden}
header{height:74px;background:#dedede;border-bottom:2px solid #b8b8b8;border-top:2px solid #f6f6f6;display:flex;align-items:center;padding:0 17px 2px 449px;font-size:28px;font-weight:700;color:#3d3d3d;justify-content:space-between}
.close{width:37px;height:37px;border-radius:50%;background:#e95420;display:flex;align-items:center;justify-content:center}
.b{padding:40px 42px 0 40px}.msg{height:28px;display:flex;align-items:center;padding-left:1px}
.bar{margin-top:25px;height:39px;background:#fff;border:2px solid #ccc;border-radius:4px;padding-left:154px}.bar i{display:block;width:184px;height:35px;background:#43b32b}
.btns{display:flex;justify-content:flex-end;gap:50px;margin-top:32px}.btns div{height:55px;display:flex;align-items:center;justify-content:center}
.p{width:198px;background:#4f7dd1;color:#fff}.q{width:136px;background:#fff;border:2px solid #6f6f6f}u{text-decoration-thickness:1px;text-underline-offset:2px}`,
  `<header>${f(289, 'Relaunch Simulation')}<div class="close"><ui-x n="16" c="#fff" s="2.200"></ui-x></div></header>
<div class="b"><div class="msg">${f(331, 'Launching simulation steps...')}</div><div class="bar"><i></i></div><div class="btns"><div class="p">${f(136, '<u>B</u>ackground')}</div><div class="q">${f(75, '<u>C</u>ancel')}</div></div></div>`);

define('vivado-window', `:host{flex:1;min-width:0;display:flex;flex-direction:column;background:#fff}.main{display:flex;height:1875px}`,
  `<title-bar></title-bar><app-header></app-header><div class="main"><flow-navigator></flow-navigator><sim-panel></sim-panel></div><status-bar></status-bar>`);
define('desktop-screen', `:host{position:relative;width:3840px;height:2160px;overflow:hidden}.row{display:flex;height:2106px}`,
  `<top-bar></top-bar><div class="row"><app-dock></app-dock><vivado-window></vivado-window></div><progress-dialog></progress-dialog>`);

/* Text box whose ink spans exactly the given width; tracking absorbs the difference. */
const pen = document.createElement('canvas').getContext('2d');
customElements.define('fit-text', class extends HTMLElement {
  connectedCallback() {
    if (this.shadowRoot) return;
    const w = +this.getAttribute('w'), chars = [...this.textContent], cs = getComputedStyle(this);
    pen.font = `${cs.fontWeight} ${cs.fontSize} ${cs.fontFamily}`;
    const lead = -pen.measureText(chars[0]).actualBoundingBoxLeft;
    const end = pen.measureText(chars[chars.length - 1]);
    const trail = end.width - end.actualBoundingBoxRight;
    const root = this.attachShadow({ mode: 'open' });
    root.innerHTML = `<style>:host{display:block;flex:none;inline-size:${w}px;white-space:pre}span{display:block;margin-inline-start:${-lead}px;inline-size:max-content}</style><span><slot></slot></span>`;
    const span = root.querySelector('span');
    const vertical = cs.writingMode !== 'horizontal-tb';
    let ls = 0;
    for (let pass = 0; pass < 3; pass++) {
      const r = span.getBoundingClientRect();
      const ink = (vertical ? r.height : r.width) - lead - trail - ls;
      ls += (w - ink) / Math.max(1, chars.length - 1);
      span.style.letterSpacing = ls.toFixed(3) + 'px';
    }
  }
});
</script>
</body>
</html>
